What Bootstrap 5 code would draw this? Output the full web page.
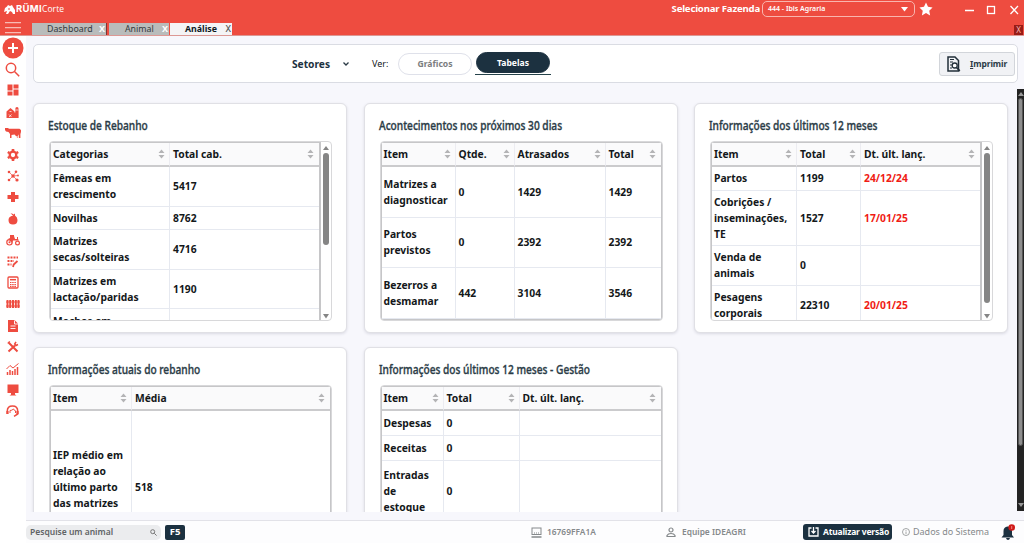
<!DOCTYPE html>
<html lang="pt-BR">
<head>
<meta charset="utf-8">
<title>Rumi Corte - Análise</title>
<link rel="stylesheet" href="https://cdn.jsdelivr.net/npm/bootstrap@5.3.0/dist/css/bootstrap.min.css">
<style>
:root{--red:#ee4c40;--navy:#1c3140}
body{font-family:"Noto Sans","Open Sans",sans-serif;font-size:9px;line-height:12px;height:543px;overflow:hidden;background:#fff;color:#15191c}
svg{display:block;flex:none}
.topbar{height:36px;background:var(--red);border-bottom:1px solid #dc9894;color:#fff}
.brandrow{height:23px;padding-left:4px}
.brand-a{font:700 9.5px/10px Inter,sans-serif;letter-spacing:.3px}
.brand-b{font:400 8.5px/10px "Open Sans",sans-serif;letter-spacing:.1px}
.farm{font-weight:700;font-size:9.6px;letter-spacing:-.18px;margin-right:2px}
.farmsel{width:153px;height:16px;border:1px solid #f9b5ae;border-radius:5px;font-size:7px;font-weight:600;padding:0 6px 0 5px}
.wtab{height:12px;background:#b9bcbb;color:#333a3c;font-size:8.8px;line-height:12px;padding-right:1px}
.wtab.on{background:#f4f4f6;color:#10191e;font-weight:700}
.wtab b{color:#fff;font-size:9px}
.wtab.on b{color:#555;font-weight:500}
.closeall{width:9px;height:10px;background:#981c17;color:#f6b7b2;font-size:8px;line-height:10px}
.sidenav{width:26px;height:507px;background:#fff;color:var(--red);padding-top:1px}
.sidenav>span{height:21.4px;width:25px}
.panel{background:#f7f7fc;height:484px}
.toolpanel{height:39px;margin:8px 6px 0 7px;background:#fff;border:1px solid #dadce3;border-radius:5px}
.setores{font-size:10.2px;font-weight:700;color:var(--navy);margin-left:258px;width:39px}
.pill{width:74px;height:22px;border:1px solid #dfe1ea;border-radius:12px;font-weight:700;font-size:8.6px;color:#7b7d7e}
.pill.on{background:var(--navy);color:#fff;border-color:var(--navy);height:21px}
.pillwrap{border-bottom:1.5px solid #25424a;width:76px;height:23px;margin-left:3px}
.printbtn{width:76px;height:24px;background:#f1f2f5;border:1px solid #d2d5da;border-radius:3px;font-weight:700;color:#2b3a45;font-size:8.5px;letter-spacing:-.1px;margin-right:2px}
.scroller{height:429px;overflow:hidden}
.board{padding:20px 0 0 7px;display:grid;grid-template-columns:314px 314px 314px;column-gap:16.5px;row-gap:14px;height:409px}
.tile{height:230px;background:#fff;border:1px solid #e0e0e5;border-radius:6px;box-shadow:0 1px 3px #d9d9e2;padding:12px 15px 0 14px}
.tile.tall{height:280px}
.tile h2{font:500 13px/18px "Noto Sans",sans-serif;color:#2a3b46;white-space:nowrap;margin:0 0 7px;width:0}
.tile h2 span{display:inline-block;transform:scaleX(.78);transform-origin:0 50%;-webkit-text-stroke:.35px #2a3b46}
.tblwrap{border:1px solid #d8d8da;border-radius:4px;width:283px;height:180px;overflow:hidden;margin-left:1px}
.tile.tall .tblwrap{height:230px}
.tbl{table-layout:fixed;border-collapse:separate;border-spacing:0;width:281px;border:solid #c6c6c8;border-width:1px 1px 1px 1px;font:700 10.3px/16px "Noto Sans",sans-serif;color:#14181a}
.tbl.sb{width:271px;border-bottom:0;border-right-width:2px}
.tbl th{background:#fafafb;height:24px;border-bottom:2px solid #cbcbcd;border-right:1px solid #ececf1;padding:0 4px 0 3px;font-weight:700}
.tbl th>div{display:flex;justify-content:space-between;align-items:center}
.tbl td{padding:0 0 0 3px;border-right:1px solid #e6e9f0;border-bottom:1px solid #e6e9f0;white-space:nowrap;vertical-align:middle}
.tbl th:first-child,.tbl td:first-child{padding-left:2px}
.tbl th:last-child,.tbl td:last-child{border-right:0}
.tbl th:last-child{padding-right:5px}
.tbl tr.toprow td{vertical-align:top;padding-top:4px}
.tbl .late{color:#f01c14}
.vbar{width:9px;padding:4px 0 1px}
.vbar i{width:6px;border-radius:3px;background:#858585}
.len-a{height:92px}.len-b{height:150px}
.h23{height:23.5px}.h25{height:25px}.h39{height:39.5px}.h50{height:50.5px}.h55{height:55.5px}.h60{height:60px}.h136{height:136px}
.edgebar{width:7px;height:422px;margin-top:6px;background:#232323;color:#bbb}
.edgebar i{width:5px;height:348px;background:#8e8e8e;border-radius:3px;border:1px solid #555}
.statusbar{height:23px;border-top:1px solid #e2e2e8;background:#fdfdfe;color:#85898b}
.statusbar>*{flex-shrink:0;white-space:nowrap}
.search{width:135px;height:15px;border-radius:5px;background:#ebecee;color:#5f6365;font-weight:600;font-size:8.5px;padding:0 4px}
.f5{width:20px;height:15px;background:var(--navy);border-radius:2px;color:#fff;font-weight:700;font-size:9.5px}
.stxt{font-weight:600;font-size:8.4px}
.upd{width:89px;height:16px;background:var(--navy);border-radius:3px;color:#fff;font-weight:700;font-size:8.5px;letter-spacing:-.18px}
</style>
</head>
<body>
<svg width="0" height="0" class="position-absolute"><defs>
<symbol id="sort" viewBox="0 0 7 10"><path d="M.5 4 3.5.6 6.500 4zM.5 6h6L3.500 9.400z" fill="#b4b4b6"/></symbol>
</defs></svg>
<header class="topbar">
  <div class="brandrow d-flex align-items-start">
    <div class="d-flex align-items-center pt-1">
      <svg width="12" height="9" viewBox="0 0 12 9" fill="#fff"><path d="M1 3 3 1.500 4 0l2 1 2-1 1 2 2 3v4H9L8 7 6 6 4 9H2l1-3-3 1z"/><path d="M4 3.500h2v1H4z" fill="#ee4c40"/></svg>
      <span class="brand-a">RÜMI</span><span class="brand-b">Corte</span>
    </div>
    <div class="ms-auto d-flex align-items-center" style="height:18px">
      <span class="farm">Selecionar Fazenda</span>
      <span class="farmsel d-flex align-items-center justify-content-between"><span>444 - Ibis Agraria</span><svg width="7" height="5" viewBox="0 0 7 5"><path d="M0 0h7L3.500 4.500z" fill="#fff"/></svg></span>
      <svg class="ms-1" width="14" height="14" viewBox="0 0 16 16" fill="#fff"><path d="m8 .6 2.300 4.900 5.200.7-3.800 3.700 1 5.400L8 12.700l-4.700 2.600 1-5.400L.5 6.200l5.200-.7z"/></svg>
      <svg style="margin:2px 3px 0 32px" width="56" height="10" viewBox="0 0 56 10" fill="none" stroke="#fff" stroke-width="1.300"><path d="M0 5.500h9M45.500 1l7.500 8M53 1l-7.500 8"/><rect x="22.500" y="1.500" width="7" height="7"/></svg>
    </div>
  </div>
  <div class="d-flex">
    <svg style="margin:-2px 10px 0 5px" width="17" height="13" viewBox="0 0 17 13" stroke="#f8bab4" stroke-width="1.200"><path d="M0 1.600h16M0 6.600h16M0 11.600h16"/></svg>
    <div class="wtab d-flex justify-content-between" style="width:75px;padding-left:15px;border-right:1px solid #7d3632">Dashboard<b>X</b></div>
    <div class="wtab d-flex justify-content-between" style="width:60px;margin-left:2px;padding-left:16px">Animal<b>X</b></div>
    <div class="wtab on d-flex justify-content-between" style="width:62px;margin-left:1px;padding-left:15px">Análise<b>X</b></div>
    <span class="closeall ms-auto text-center" style="margin:2px 1px 0 0">X</span>
  </div>
</header>
<div class="d-flex">
  <nav class="sidenav flex-shrink-0 d-flex flex-column">
    <span class="d-grid" style="place-items:center"><svg width="22" height="22" viewBox="0 0 22 22"><circle cx="11" cy="11" r="10.500" fill="currentColor"/><path d="M11 6v10M6 11h10" stroke="#fff" stroke-width="2"/></svg></span>
    <span class="d-grid" style="place-items:center"><svg width="15" height="15" viewBox="0 0 15 15" fill="none" stroke="currentColor" stroke-width="1.500"><circle cx="6" cy="6" r="4.700"/><path d="m9.500 9.500 4.700 4.700"/></svg></span>
    <span class="d-grid" style="place-items:center"><svg width="12" height="12" viewBox="0 0 12 12" fill="currentColor"><path d="M.5.5h5v6h-5zM6.500.5h5v4h-5zM.5 7.500h5v4h-5zM6.500 5.500h5v6h-5z"/></svg></span>
    <span class="d-grid" style="place-items:center"><svg width="13" height="12" viewBox="0 0 13 12" fill="currentColor"><path d="M.5 5.500 4.500 2l4 3.500V12h-8zM9.300 12V3q0-2 1.700-2 1.600 0 1.600 2v9z"/><path d="M8 12V6.500h2V12z"/><path d="M3 11l2.500-2.500M3 8.500 5.500 11M3.500 5.500h2M9.300 4h3.300" stroke="#fff" stroke-width=".7"/></svg></span>
    <span class="d-grid" style="place-items:center"><svg width="16" height="12" viewBox="0 0 16 12" fill="currentColor"><path d="M0 1h3l1 .8h10.500L16 3v4l-.6-2v6h-1.500V7.500L12.500 9H11L9.500 7.500 6.500 8v3H5V7L3.500 5 1 4.500 0 3z"/><path d="m11 8 1 3h1l.5-3z" opacity=".5"/></svg></span>
    <span class="d-grid" style="place-items:center"><svg width="12" height="12" viewBox="0 0 12 12"><circle cx="6" cy="6" r="3.300" fill="none" stroke="currentColor" stroke-width="2.300"/><path d="M6 0v2M6 10v2M.8 3l1.700 1M9.500 8l1.700 1M.8 9l1.700-1M9.500 4l1.700-1" stroke="currentColor" stroke-width="2.600"/></svg></span>
    <span class="d-grid" style="place-items:center"><svg width="12" height="12" viewBox="0 0 12 12" fill="currentColor"><path d="m2 2 4 4 3-4M2 10l4-4 4 4M6 6l5-.5" fill="none" stroke="currentColor" stroke-width=".7"/><circle cx="2" cy="2" r="1.300"/><circle cx="9" cy="1.700" r="1.300"/><circle cx="2" cy="10" r="1.300"/><circle cx="10" cy="10" r="1.600"/><circle cx="6" cy="6" r="1.700"/><circle cx="11" cy="5.500" r=".9"/></svg></span>
    <span class="d-grid" style="place-items:center"><svg width="12" height="12" viewBox="0 0 12 12" fill="currentColor"><path d="M4 1h4v3h3.500v4H8v3H4V8H.5V4H4z"/></svg></span>
    <span class="d-grid" style="place-items:center"><svg width="10" height="12" viewBox="0 0 10 12" fill="currentColor"><path d="M5 3Q4 1 2.500.5q2-.5 3 1L7 .5v2Q9.500 4 9.500 7q0 4.500-4.500 4.500T.5 7Q.5 4 3.500 3z"/></svg></span>
    <span class="d-grid" style="place-items:center"><svg width="14" height="12" viewBox="0 0 14 12" fill="currentColor"><path d="M4 1h4v1l1 3h2V3h1v2l1 1.500H7L6 9 2 5l2-1z"/><g fill="none" stroke="currentColor" stroke-width="1.200"><circle cx="3.500" cy="8.300" r="2.700"/><circle cx="11.500" cy="9" r="1.900"/></g><circle cx="3.500" cy="8.300" r="1"/></svg></span>
    <span class="d-grid" style="place-items:center"><svg width="12" height="12" viewBox="0 0 12 12" fill="none" stroke="currentColor"><path d="M.5 1.500h10.500M.5 5h6.500M.5 8.500h4" stroke-width="2" stroke-dasharray="2 1"/><path d="m6 11 .7-2.500L10.500 5" stroke-width="1.800"/></svg></span>
    <span class="d-grid" style="place-items:center"><svg width="12" height="13" viewBox="0 0 12 13" fill="none" stroke="currentColor"><rect x="1" y="1" width="10" height="11" rx="1" stroke-width="1.300"/><path d="M3 3.700h6" stroke-width="1.500"/><path d="M3 6.500h6M3 8.500h6M3 10.300h6" stroke-width="1.200" stroke-dasharray="1.500 .7"/></svg></span>
    <span class="d-grid" style="place-items:center"><svg width="14" height="10" viewBox="0 0 14 10" stroke="currentColor"><path d="M1.500 1v8M4.200 1v8M7 1v8M9.800 1v8M12.500 1v8" stroke-width="2"/><path d="M0 3h14M0 7h14" stroke-width="1"/></svg></span>
    <span class="d-grid" style="place-items:center"><svg width="10" height="12" viewBox="0 0 10 12"><path d="M0 0h6.500L10 3.500V12H0z" fill="currentColor"/><path d="M2.500 6h5M2.500 8.500h5M6.500.5V4H10" fill="none" stroke="#fff" stroke-width=".9"/></svg></span>
    <span class="d-grid" style="place-items:center"><svg width="12" height="12" viewBox="0 0 12 12" fill="none" stroke="currentColor"><path d="m1.500 10.500 6.500-6M2 2l8.500 8.500" stroke-width="2"/><path d="M11 3.500 9 4.500 7.700 3 9 .8M.8 2.500l2-2" stroke-width="1.500"/></svg></span>
    <span class="d-grid" style="place-items:center"><svg width="13" height="12" viewBox="0 0 13 12" fill="none" stroke="currentColor"><path d="M1.500 12V9M4 12V7M6.500 12V8M9 12V6M11.500 12V4" stroke-width="1.500"/><path d="m.5 6 3.500-3.500L7 5l5.500-4.500" stroke-width="1"/></svg></span>
    <span class="d-grid" style="place-items:center"><svg width="12" height="12" viewBox="0 0 12 12" fill="currentColor"><path d="M.5.500h11v8.500H8v1.500l1.500 1h-7L4 10.500V9H.5z"/></svg></span>
    <span class="d-grid" style="place-items:center"><svg width="13" height="12" viewBox="0 0 13 12" fill="none" stroke="currentColor"><path d="M1.300 9V6q0-5 5.200-5t5.200 5v3L8 11.300" stroke-width="1.500"/><path d="M4 8V5.500q2 0 3.500-1.500Q8 5.500 9.500 5.800V8" stroke-width="1"/><path d="M1.500 6v3M11.500 6v3" stroke-width="2.200"/></svg></span>
  </nav>
  <div class="flex-grow-1">
    <main class="panel">
      <section class="d-flex">
      <div class="toolpanel flex-grow-1 d-flex align-items-center">
        <span class="setores">Setores</span>
        <svg style="margin-left:12px" width="6" height="4" viewBox="0 0 6 4" fill="none" stroke="#2b3a45" stroke-width="1.300"><path d="m.5.5 2.500 2.500L5.500.5"/></svg>
        <span style="margin-left:23px;width:26px">Ver:</span>
        <span class="pill d-flex align-items-center justify-content-center">Gráficos</span>
        <span class="pillwrap d-flex justify-content-center"><span class="pill on d-flex align-items-center justify-content-center">Tabelas</span></span>
        <span class="printbtn ms-auto d-flex align-items-center">
          <svg style="margin:0 9px 0 7px" width="14" height="16" viewBox="0 0 14 16" fill="none" stroke="#222f39"><path d="M1 1h7l3.500 3.500V15H1z" stroke-width="1.500"/><path d="M3 3.500h4M3 6h3M3 9h2M3 12h2" stroke-width="1.200"/><circle cx="7.700" cy="9.500" r="2.500" fill="#fff" stroke-width="1.300"/><path d="m9.500 11.500 3.300 3.300" stroke-width="1.700"/></svg>
          <span><u>I</u>mprimir</span></span>
      </div>
      </section>
      <div class="scroller d-flex">
      <div class="board flex-grow-1">
        <article class="tile"><h2><span>Estoque de Rebanho</span></h2>
          <div class="tblwrap d-flex"><table class="tbl sb flex-shrink-0">
            <colgroup><col style="width:119px"><col></colgroup>
            <tr><th><div>Categorias<svg width="7" height="10"><use href="#sort"/></svg></div></th><th><div>Total cab.<svg width="7" height="10"><use href="#sort"/></svg></div></th></tr>
            <tr class="h39"><td>Fêmeas em<br>crescimento</td><td>5417</td></tr>
            <tr class="h23"><td>Novilhas</td><td>8762</td></tr>
            <tr class="h39"><td>Matrizes<br>secas/solteiras</td><td>4716</td></tr>
            <tr class="h39"><td>Matrizes em<br>lactação/paridas</td><td>1190</td></tr>
            <tr class="h39 toprow"><td>Machos em</td><td></td></tr>
          </table><div class="vbar d-flex flex-column align-items-center"><svg width="6" height="4" viewBox="0 0 6 4"><path d="M0 4h6L3 0z" fill="#858585"/></svg><i class="len-a" style="margin-top:3px"></i><svg class="mt-auto" width="6" height="5" viewBox="0 0 6 5"><path d="M0 0h6L3 4.500z" fill="#858585"/></svg></div></div>
        </article>
        <article class="tile"><h2><span>Acontecimentos nos próximos 30 dias</span></h2>
          <div class="tblwrap"><table class="tbl">
            <colgroup><col style="width:74px"><col style="width:59px"><col style="width:91px"><col></colgroup>
            <tr><th><div>Item<svg width="7" height="10"><use href="#sort"/></svg></div></th><th><div>Qtde.<svg width="7" height="10"><use href="#sort"/></svg></div></th><th><div>Atrasados<svg width="7" height="10"><use href="#sort"/></svg></div></th><th><div>Total<svg width="7" height="10"><use href="#sort"/></svg></div></th></tr>
            <tr class="h50"><td>Matrizes a<br>diagnosticar</td><td>0</td><td>1429</td><td>1429</td></tr>
            <tr class="h50"><td>Partos<br>previstos</td><td>0</td><td>2392</td><td>2392</td></tr>
            <tr class="h50"><td>Bezerros a<br>desmamar</td><td>442</td><td>3104</td><td>3546</td></tr>
          </table></div>
        </article>
        <article class="tile"><h2><span>Informações dos últimos 12 meses</span></h2>
          <div class="tblwrap d-flex"><table class="tbl sb flex-shrink-0">
            <colgroup><col style="width:85px"><col style="width:64px"><col></colgroup>
            <tr><th><div>Item<svg width="7" height="10"><use href="#sort"/></svg></div></th><th><div>Total<svg width="7" height="10"><use href="#sort"/></svg></div></th><th><div>Dt. últ. lanç.<svg width="7" height="10"><use href="#sort"/></svg></div></th></tr>
            <tr class="h23"><td>Partos</td><td>1199</td><td class="late">24/12/24</td></tr>
            <tr class="h55"><td>Cobrições /<br>inseminações,<br>TE</td><td>1527</td><td class="late">17/01/25</td></tr>
            <tr class="h39"><td>Venda de<br>animais</td><td>0</td><td></td></tr>
            <tr class="h39"><td>Pesagens<br>corporais</td><td>22310</td><td class="late">20/01/25</td></tr>
          </table><div class="vbar d-flex flex-column align-items-center"><svg width="6" height="4" viewBox="0 0 6 4"><path d="M0 4h6L3 0z" fill="#858585"/></svg><i class="len-b" style="margin-top:3px"></i><svg class="mt-auto" width="6" height="5" viewBox="0 0 6 5"><path d="M0 0h6L3 4.500z" fill="#858585"/></svg></div></div>
        </article>
        <article class="tile tall"><h2><span>Informações atuais do rebanho</span></h2>
          <div class="tblwrap"><table class="tbl">
            <colgroup><col style="width:81px"><col></colgroup>
            <tr><th><div>Item<svg width="7" height="10"><use href="#sort"/></svg></div></th><th><div>Média<svg width="7" height="10"><use href="#sort"/></svg></div></th></tr>
            <tr class="h136"><td>IEP médio em<br>relação ao<br>último parto<br>das matrizes</td><td style="padding-top:16px">518</td></tr>
          </table></div>
        </article>
        <article class="tile tall"><h2><span>Informações dos últimos 12 meses - Gestão</span></h2>
          <div class="tblwrap"><table class="tbl">
            <colgroup><col style="width:62px"><col style="width:76px"><col></colgroup>
            <tr><th><div>Item<svg width="7" height="10"><use href="#sort"/></svg></div></th><th><div>Total<svg width="7" height="10"><use href="#sort"/></svg></div></th><th><div>Dt. últ. lanç.<svg width="7" height="10"><use href="#sort"/></svg></div></th></tr>
            <tr class="h25"><td>Despesas</td><td>0</td><td></td></tr>
            <tr class="h25"><td>Receitas</td><td>0</td><td></td></tr>
            <tr class="h60"><td>Entradas<br>de<br>estoque</td><td>0</td><td></td></tr>
          </table></div>
        </article>
      </div>
      <div class="edgebar d-flex flex-column align-items-center flex-shrink-0"><svg width="6" height="9" viewBox="0 0 6 9"><path d="M0 7h6L3 3z" fill="#999"/></svg><i></i><svg class="mt-auto mb-1" width="6" height="4" viewBox="0 0 6 4"><path d="M0 0h6L3 4z" fill="#999"/></svg></div>
      </div>
    </main>
    <footer class="statusbar d-flex align-items-center">
      <span class="search d-flex align-items-center justify-content-between">Pesquise um animal<svg width="7" height="7" viewBox="0 0 7 7" fill="none" stroke="#777"><circle cx="2.700" cy="2.700" r="2"/><path d="m4.300 4.300 2.300 2.300"/></svg></span>
      <span class="f5 d-flex align-items-center justify-content-center" style="margin-left:4px">F5</span>
      <svg style="margin-left:346px" width="11" height="11" viewBox="0 0 11 11" fill="none" stroke="#85898b"><rect x="1" y="1" width="9" height="6.500"/><path d="M.5 10h10" stroke-width="1.500"/><path d="M3 6h5" stroke-dasharray="1 1"/></svg>
      <span style="margin-left:5px;width:118px" class="stxt">16769FFA1A</span>
      <svg style="margin-left:1px" width="10" height="11" viewBox="0 0 10 11" fill="none" stroke="#85898b" stroke-width="1.200"><circle cx="5" cy="3" r="2"/><path d="M1 9.500V8.500Q2 6.500 5 6.500T9 8.500V9.500z"/></svg>
      <span style="margin-left:6px;width:121px" class="stxt">Equipe IDEAGRI</span>
      <span class="upd d-flex align-items-center" style="padding-left:5px"><svg width="11" height="10" viewBox="0 0 11 10" fill="none" stroke="#fff" stroke-width="1.300"><path d="M3.500 1H1v8h9V1H7.500M5.500 0v6M3.500 4l2 2 2-2"/></svg><span style="margin-left:4px">Atualizar versão</span></span>
      <svg style="margin-left:10px" width="8" height="8" viewBox="0 0 8 8" fill="none" stroke="#8d8f91" stroke-width=".8"><circle cx="4" cy="4" r="3.500"/><path d="M4 3.500V6M4 2v.8"/></svg>
      <span style="margin-left:3px;width:88px">Dados do Sistema</span>
      <svg width="15" height="17" viewBox="0 0 15 17"><path d="M.5 13.500 2.500 11V7q0-4 4-4.500T11 7v4l2 2.500zM5 14h4q-.5 2-2 2t-2-2z" fill="#1c3140"/><circle cx="10.700" cy="3.500" r="3.300" fill="#d01a18"/><path d="M10.700 2v3" stroke="#f2a09c" stroke-width=".8"/></svg>
    </footer>
  </div>
</div>
<script src="https://cdn.jsdelivr.net/npm/bootstrap@5.3.0/dist/js/bootstrap.bundle.min.js"></script>
</body>
</html>
